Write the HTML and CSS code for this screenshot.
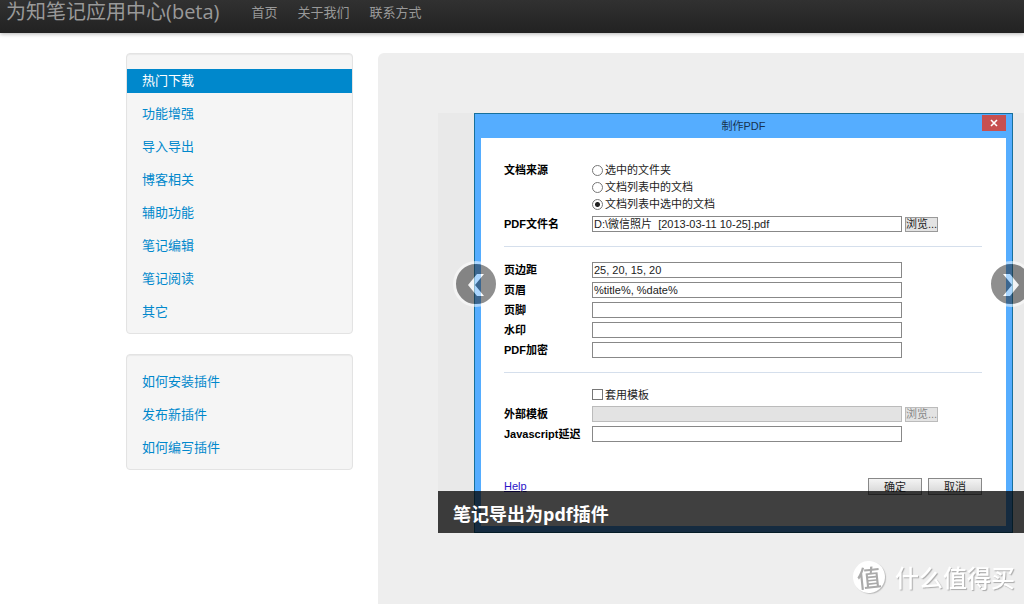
FILE: index.html
```html
<!DOCTYPE html>
<html lang="zh-CN">
<head>
<meta charset="utf-8">
<title>为知笔记应用中心(beta)</title>
<link rel="stylesheet" href="styles.css">
</head>
<body>
<header class="navbar">
  <a class="brand" href="#">为知笔记应用中心(beta)</a>
  <nav class="nav">
    <a href="#">首页</a>
    <a href="#">关于我们</a>
    <a href="#">联系方式</a>
  </nav>
</header>

<div class="page">
  <aside class="sidebar">
    <nav class="well">
      <a class="active" href="#">热门下载</a>
      <a href="#">功能增强</a>
      <a href="#">导入导出</a>
      <a href="#">博客相关</a>
      <a href="#">辅助功能</a>
      <a href="#">笔记编辑</a>
      <a href="#">笔记阅读</a>
      <a href="#">其它</a>
    </nav>
    <nav class="well">
      <a href="#">如何安装插件</a>
      <a href="#">发布新插件</a>
      <a href="#">如何编写插件</a>
    </nav>
  </aside>

  <main class="hero">
    <section class="carousel">
      <form class="dialog">
        <div class="titlebar">
          <span class="title">制作PDF</span>
          <button class="close" type="button" aria-label="关闭">
            <svg width="8" height="8" viewBox="0 0 8 8"><path d="M1 1l6 6M7 1L1 7" stroke="#fff" stroke-width="1.6"/></svg>
          </button>
        </div>
        <div class="dialog-body">
          <div class="row source">
            <span class="label">文档来源</span>
            <div class="options">
              <label class="option"><input type="radio" name="source">选中的文件夹</label>
              <label class="option"><input type="radio" name="source">文档列表中的文档</label>
              <label class="option"><input type="radio" name="source" checked>文档列表中选中的文档</label>
            </div>
          </div>
          <div class="row">
            <label class="label" for="file">PDF文件名</label>
            <input class="field" id="file" type="text" value="D:\微信照片  [2013-03-11 10-25].pdf">
            <button class="browse" type="button">浏览...</button>
          </div>
          <hr>
          <div class="row"><label class="label" for="margin">页边距</label><input class="field" id="margin" type="text" value="25, 20, 15, 20"></div>
          <div class="row"><label class="label" for="head">页眉</label><input class="field" id="head" type="text" value="%title%, %date%"></div>
          <div class="row"><label class="label" for="foot">页脚</label><input class="field" id="foot" type="text"></div>
          <div class="row"><label class="label" for="mark">水印</label><input class="field" id="mark" type="text"></div>
          <div class="row"><label class="label" for="lock">PDF加密</label><input class="field" id="lock" type="text"></div>
          <hr>
          <div class="row check">
            <span class="label"></span>
            <label class="option"><input type="checkbox">套用模板</label>
          </div>
          <div class="row">
            <label class="label" for="tpl">外部模板</label>
            <input class="field" id="tpl" type="text" disabled>
            <button class="browse" type="button" disabled>浏览...</button>
          </div>
          <div class="row"><label class="label" for="delay">Javascript延迟</label><input class="field" id="delay" type="text"></div>
          <div class="actions">
            <a class="help" href="#">Help</a>
            <button class="push" type="button">确定</button>
            <button class="push" type="button">取消</button>
          </div>
        </div>
      </form>
      <h4 class="caption">笔记导出为pdf插件</h4>
      <button class="control prev" type="button" aria-label="上一张">
        <svg width="40" height="40" viewBox="0 0 40 40"><path d="M21 10h7l-9 11L28 32h-7L12 21z" fill="#fff"/></svg>
      </button>
      <button class="control next" type="button" aria-label="下一张">
        <svg width="40" height="40" viewBox="0 0 40 40"><path d="M19 10h-7l9 11L12 32h7l9-11z" fill="#fff"/></svg>
      </button>
    </section>
  </main>
</div>

<div class="watermark"><span class="seal">值</span><span>什么值得买</span></div>
</body>
</html>
```
FILE: styles.css
```css
* { box-sizing: border-box; }

body {
  margin: 0;
  min-height: 100vh;
  display: flex;
  flex-direction: column;
  overflow: hidden;
  background: #fff;
  font: 13px/20px "Open Sans", "Noto Sans CJK SC", sans-serif;
}

a { text-decoration: none; }

/* Top bar */
.navbar {
  display: flex;
  align-items: center;
  gap: 32px;
  height: 33px;
  padding: 0 6px 9px;
  background: linear-gradient(#313131, #222);
  box-shadow: 0 1px 4px rgba(0, 0, 0, .3);
  color: #999;
}
.brand { font-size: 20px; line-height: 24px; color: #999; }
.nav { display: flex; gap: 20px; }
.nav a { color: #999; }

/* Columns */
.page {
  flex: 1;
  display: flex;
  gap: 25px;
  margin-right: -85px;
  padding: 20px 0 0 126px;
}
.sidebar {
  flex: none;
  width: 227px;
  display: flex;
  flex-direction: column;
  gap: 20px;
}
.well {
  display: flex;
  flex-direction: column;
  gap: 9px;
  padding: 15px 0 9px;
  border: 1px solid #e3e3e3;
  border-radius: 4px;
  background: #f5f5f5;
  box-shadow: inset 0 1px 1px rgba(0, 0, 0, .05);
}
.well a { padding: 1px 15px 3px; color: #08c; }
.well .active { background: #08c; color: #fff; }
.hero {
  flex: 1;
  min-width: 0;
  padding: 60px;
  border-radius: 6px 6px 0 0;
  background: #eee;
}

/* Carousel */
.carousel {
  position: relative;
  padding: 0 36px;
  background: #e9e9e9;
}
.caption {
  position: absolute;
  left: 0;
  right: 0;
  bottom: 0;
  margin: 0;
  padding: 13px 15px 9px;
  background: rgba(0, 0, 0, .75);
  color: #fff;
  font-size: 18px;
  line-height: 20px;
}
.control {
  position: absolute;
  top: 148px;
  width: 46px;
  height: 46px;
  padding: 0;
  border: 3px solid #fff;
  border-radius: 50%;
  background: #222;
  opacity: .5;
}
.control svg { display: block; }
.prev { left: 15px; }
.next { right: 15px; }

/* Dialog window */
.dialog {
  padding: 0 6px 6px;
  border: 1px solid #17709c;
  background: #55adff;
  color: #222;
  font: 11px/17px "Liberation Sans", "Noto Sans CJK SC", sans-serif;
}
.dialog input, .dialog button { font: inherit; color: inherit; }
.titlebar { position: relative; height: 24px; text-align: center; line-height: 24px; }
.title { color: #17334f; }
.close {
  position: absolute;
  top: 1px;
  right: 0;
  width: 24px;
  height: 16px;
  display: grid;
  place-items: center;
  padding: 0;
  border: 0;
  background: #c75050;
}
.dialog-body {
  padding: 24px 24px 31px 23px;
  background: #fff;
}
.row {
  display: flex;
  align-items: center;
  gap: 3px;
  height: 20px;
}
.source { height: auto; align-items: flex-start; padding-bottom: 1px; }
.check { height: 18px; }
.label {
  flex: none;
  width: 85px;
  color: #000;
  font-weight: bold;
  white-space: nowrap;
}
.option { display: flex; align-items: center; gap: 2px; }
.option input {
  appearance: none;
  width: 11px;
  height: 11px;
  margin: 0 0 1px;
  border: 1px solid #777;
  background: #fff;
}
.option input[type="radio"] { border-radius: 50%; }
.option input:checked {
  background: radial-gradient(circle, #222 0 2px, #fff 3px);
}
.field {
  width: 310px;
  height: 16px;
  padding: 0 1px;
  border: 1px solid #888;
  background: #fff;
  white-space: pre;
}
.field:disabled { border-color: #bbb; background: #e3e3e3; }
.dialog .browse {
  width: 33px;
  height: 15px;
  padding: 0;
  border: 1px solid #999;
  background: #e3e3e3;
  line-height: 12px;
  white-space: nowrap;
}
.dialog .browse:disabled { border-color: #bbb; color: #888; }
hr {
  height: 1px;
  margin: 12px 0 13px;
  border: 0;
  background: #d5dfec;
}
.actions {
  display: flex;
  align-items: center;
  gap: 6px;
  margin-top: 34px;
}
.help { margin-right: auto; color: #2a14c8; text-decoration: underline; }
.push {
  width: 54px;
  height: 17px;
  padding: 0;
  border: 1px solid #888;
  background: linear-gradient(#f4f4f4, #d4d4d4);
  line-height: 15px;
}

/* Watermark floating over the page corner */
.watermark {
  position: fixed;
  right: 9px;
  bottom: 10px;
  display: flex;
  align-items: center;
  gap: 10px;
  color: #fff;
  font: 500 24px/34px "Noto Sans CJK SC", sans-serif;
  text-shadow: 1px 1px 1px #aaa;
}
.seal {
  width: 32px;
  height: 32px;
  border-radius: 50%;
  background: #fff;
  box-shadow: 1px 1px 1px #bbb;
  color: #aaa;
  font-size: 24px;
  line-height: 32px;
  text-align: center;
  text-shadow: none;
  transform: rotate(-6deg);
}
```
